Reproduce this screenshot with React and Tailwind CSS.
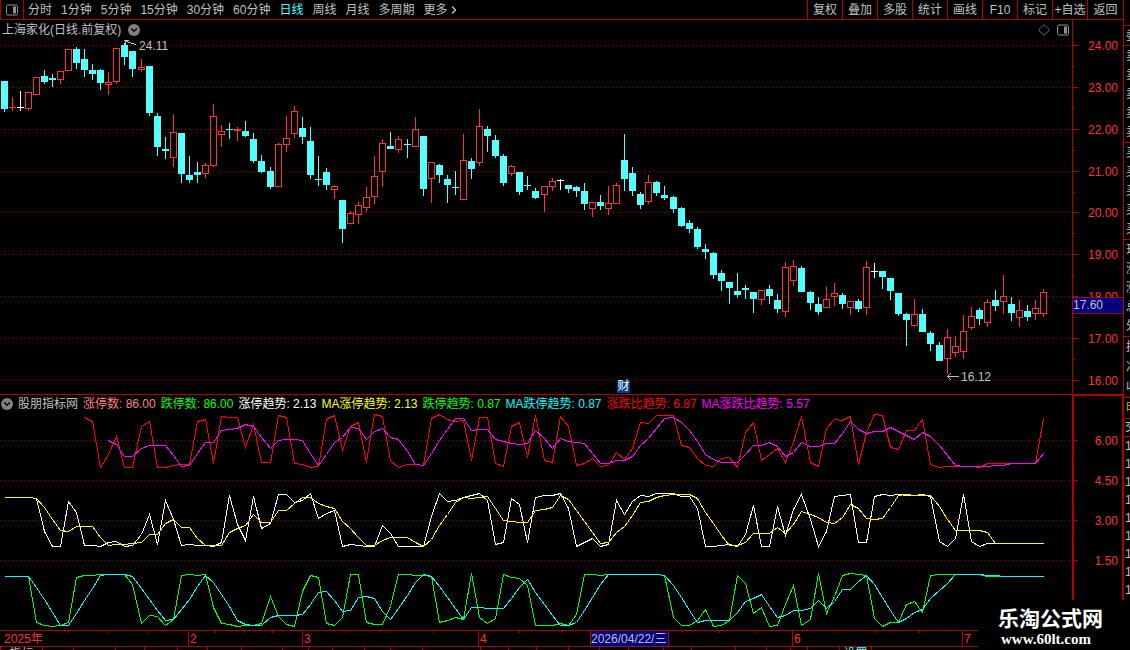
import { ChevronDown, ChevronRight, Diamond } from 'lucide-react';

const periods = ['分时', '1分钟', '5分钟', '15分钟', '30分钟', '60分钟', '日线', '周线', '月线', '多周期'];
const tools = ['复权', '叠加', '多股', '统计', '画线', 'F10', '标记', '+自选'];

// d = down, u = up, n = unchanged; then high, body top, body bottom, low
const candles = [
  ['d', 81, 81, 109, 112], ['u', 97, 107, 108, 111], ['n', 91, 107, 108, 111], ['u', 92, 92, 109, 111],
  ['u', 77, 77, 95, 95], ['d', 70, 76, 82, 84], ['d', 74, 78, 80, 87], ['u', 71, 71, 80, 84],
  ['u', 49, 49, 71, 71], ['d', 47, 49, 63, 69], ['d', 49, 59, 70, 77], ['d', 64, 70, 74, 80],
  ['d', 69, 70, 83, 90], ['u', 72, 82, 85, 95], ['u', 48, 48, 82, 84], ['d', 43, 45, 57, 65],
  ['d', 51, 51, 69, 77], ['u', 59, 67, 70, 72], ['d', 66, 66, 113, 116], ['d', 113, 116, 147, 156],
  ['d', 137, 149, 151, 159], ['u', 114, 132, 158, 167], ['d', 133, 133, 174, 183], ['d', 156, 175, 180, 183],
  ['d', 162, 172, 175, 183], ['u', 163, 165, 174, 178], ['u', 104, 116, 166, 167], ['u', 125, 131, 135, 147],
  ['d', 123, 129, 130, 139], ['u', 127, 129, 131, 141], ['d', 121, 131, 136, 137], ['d', 133, 139, 161, 163],
  ['d', 155, 161, 172, 173], ['d', 167, 171, 187, 189], ['u', 143, 144, 187, 187], ['u', 116, 138, 145, 152],
  ['u', 106, 111, 134, 138], ['d', 117, 128, 137, 144], ['d', 127, 141, 175, 179], ['d', 156, 179, 180, 186],
  ['d', 168, 172, 185, 190], ['u', 185, 186, 190, 199], ['d', 200, 200, 229, 243], ['u', 211, 213, 224, 224],
  ['u', 202, 205, 215, 224], ['u', 187, 197, 208, 212], ['u', 156, 176, 197, 204], ['u', 139, 143, 172, 187],
  ['d', 132, 146, 149, 149], ['u', 136, 139, 150, 153], ['d', 139, 144, 145, 158], ['u', 117, 129, 147, 147],
  ['d', 136, 136, 189, 196], ['u', 162, 162, 179, 203], ['d', 164, 165, 175, 183], ['d', 175, 179, 185, 203],
  ['d', 171, 187, 188, 195], ['u', 134, 160, 200, 200], ['d', 158, 161, 169, 179], ['u', 109, 126, 163, 166],
  ['d', 126, 129, 136, 152], ['d', 135, 140, 156, 158], ['d', 154, 156, 183, 186], ['u', 165, 166, 174, 176],
  ['d', 172, 172, 192, 195], ['d', 176, 185, 186, 190], ['d', 188, 191, 198, 199], ['u', 186, 186, 195, 212],
  ['u', 178, 181, 187, 191], ['n', 179, 180, 181, 190], ['d', 185, 185, 189, 193], ['d', 186, 187, 191, 197],
  ['d', 183, 191, 204, 210], ['u', 202, 202, 209, 217], ['d', 195, 202, 206, 210], ['u', 186, 203, 209, 215],
  ['u', 183, 185, 204, 204], ['d', 134, 160, 179, 191], ['d', 167, 173, 191, 196], ['d', 192, 194, 205, 209],
  ['u', 175, 182, 202, 204], ['d', 181, 182, 193, 196], ['d', 186, 195, 198, 200], ['d', 196, 197, 209, 213],
  ['d', 207, 208, 226, 227], ['d', 220, 223, 229, 233], ['d', 227, 229, 247, 249], ['d', 244, 249, 252, 259],
  ['d', 252, 253, 275, 279], ['d', 270, 273, 281, 291], ['d', 282, 282, 288, 304], ['d', 273, 291, 295, 298],
  ['d', 285, 288, 290, 299], ['d', 292, 292, 299, 313], ['u', 290, 290, 300, 305], ['d', 285, 289, 296, 304],
  ['d', 294, 300, 309, 313], ['u', 262, 267, 312, 317], ['u', 260, 266, 281, 286], ['d', 266, 268, 292, 292],
  ['d', 291, 292, 303, 310], ['d', 297, 304, 312, 315], ['u', 287, 299, 308, 308], ['u', 283, 293, 297, 306],
  ['d', 293, 295, 304, 309], ['u', 301, 301, 308, 315], ['d', 299, 301, 309, 312], ['u', 261, 267, 308, 315],
  ['n', 263, 271, 272, 278], ['d', 271, 271, 277, 289], ['d', 278, 278, 291, 300], ['d', 293, 293, 314, 316],
  ['d', 313, 314, 320, 346], ['u', 299, 314, 326, 327], ['d', 309, 314, 332, 332], ['d', 331, 333, 344, 351],
  ['d', 342, 345, 361, 361], ['u', 329, 337, 359, 374], ['u', 336, 346, 353, 357], ['u', 315, 331, 352, 359],
  ['u', 307, 316, 328, 330], ['d', 308, 310, 319, 325], ['u', 299, 302, 323, 327], ['d', 290, 300, 306, 311],
  ['u', 275, 296, 302, 314], ['d', 297, 304, 313, 321], ['u', 300, 310, 318, 327], ['d', 305, 311, 317, 321],
  ['u', 300, 308, 314, 320], ['u', 289, 292, 314, 317],
];

const series = [
  {
    color: '#ff0000',
    start: 10,
    values: [
      417, 421, 467, 454, 436, 467, 467, 426, 421, 467, 467, 465, 464, 464, 421, 419, 463, 416, 417, 417,
      447, 424, 462, 462, 415, 417, 463, 464, 467, 466, 419, 415, 450, 426, 422, 462, 414, 416, 460, 467,
      464, 464, 465, 418, 414, 419, 421, 420, 460, 417, 417, 463, 466, 426, 422, 457, 415, 460, 462, 416,
      426, 465, 463, 458, 466, 465, 452, 459, 448, 422, 423, 415, 415, 415, 445, 447, 458, 465, 466, 458,
      457, 467, 432, 422, 460, 454, 448, 462, 442, 416, 462, 466, 428, 419, 420, 416, 464, 432, 414, 415,
      447, 449, 430, 430, 419, 464, 467, 466, 466, 466, 466, 467, 463, 463, 463, 463, 463, 463, 463, 418,
    ],
  },
  {
    color: '#ff00ff',
    start: 13,
    values: [
      440, 444, 456, 456, 448, 445, 445, 445, 455, 466, 465, 453, 442, 442, 430, 429, 428, 424, 426, 437,
      448, 440, 439, 439, 440, 453, 465, 454, 442, 437, 427, 428, 439, 431, 428, 437, 439, 451, 464, 465,
      453, 440, 429, 418, 418, 430, 429, 429, 439, 441, 443, 444, 443, 430, 438, 448, 438, 441, 442, 443,
      453, 463, 463, 460, 460, 456, 445, 438, 428, 418, 417, 422, 430, 441, 454, 459, 462, 462, 462, 454,
      445, 445, 442, 446, 456, 452, 442, 446, 446, 443, 443, 433, 421, 429, 433, 431, 431, 427, 431, 435,
      439, 432, 436, 445, 455, 465, 466, 466, 466, 466, 465, 465, 463, 463, 463, 463, 453,
    ],
  },
  {
    color: '#ffffff',
    start: 0,
    values: [
      497, 497, 497, 497, 498, 531, 546, 546, 501, 512, 545, 545, 546, 542, 541, 546, 545, 534, 514, 544,
      500, 519, 545, 544, 545, 545, 546, 542, 495, 524, 540, 496, 528, 523, 494, 494, 502, 500, 493, 518,
      513, 510, 546, 544, 545, 546, 546, 525, 533, 546, 546, 546, 546, 516, 493, 501, 500, 497, 495, 493,
      500, 544, 542, 498, 504, 542, 497, 495, 495, 493, 508, 546, 542, 538, 546, 544, 500, 514, 501, 495,
      496, 493, 493, 493, 496, 496, 508, 546, 546, 545, 544, 546, 534, 505, 546, 546, 506, 535, 509, 494,
      519, 546, 531, 496, 495, 494, 542, 542, 496, 494, 495, 494, 495, 495, 494, 496, 541, 546, 538, 494,
      541, 546, 543, 543, 543, 543, 543, 543, 543, 543,
    ],
  },
  {
    color: '#ffff00',
    start: 0,
    values: [
      497, 497, 497, 497, 498, 507, 519, 530, 531, 526, 526, 526, 537, 545, 544, 544, 543, 542, 534, 534,
      523, 519, 527, 527, 538, 545, 545, 545, 532, 528, 525, 514, 522, 522, 510, 510, 503, 497, 497, 503,
      506, 508, 521, 528, 537, 545, 545, 540, 537, 537, 537, 542, 546, 539, 525, 514, 502, 497, 498, 497,
      496, 508, 520, 521, 522, 522, 510, 509, 507, 495, 499, 510, 521, 532, 543, 542, 532, 526, 515, 502,
      501, 497, 495, 494, 494, 494, 498, 512, 523, 535, 545, 545, 542, 533, 533, 533, 527, 533, 524, 511,
      514, 517, 522, 523, 517, 504, 508, 518, 519, 518, 507, 495, 494, 495, 495, 495, 506, 519, 530, 530,
      530, 530, 532, 543, 543, 543, 543, 543, 543, 543,
    ],
  },
  {
    color: '#00ff00',
    start: 0,
    values: [
      576, 576, 576, 576, 622, 625, 626, 625, 622, 577, 575, 575, 574, 574, 574, 574, 584, 623, 615, 616,
      625, 619, 575, 574, 575, 574, 607, 623, 624, 626, 625, 625, 623, 596, 616, 624, 626, 591, 575, 577,
      623, 625, 617, 574, 574, 622, 624, 624, 606, 574, 574, 575, 575, 576, 622, 620, 617, 619, 573, 617,
      623, 618, 574, 577, 578, 585, 625, 625, 625, 623, 625, 614, 574, 574, 575, 574, 574, 574, 574, 574,
      574, 574, 575, 617, 625, 625, 620, 609, 626, 625, 620, 575, 583, 613, 607, 626, 625, 604, 585, 625,
      619, 573, 613, 596, 575, 573, 574, 575, 618, 626, 622, 622, 604, 601, 612, 575, 574, 574, 574, 574,
      574, 574, 576, 576, 576, 576, 576, 576, 576, 576,
    ],
  },
  {
    color: '#00ffff',
    start: 0,
    values: [
      576, 576, 576, 576, 587, 599, 612, 625, 625, 613, 600, 588, 575, 574, 574, 574, 576, 588, 599, 610,
      620, 619, 609, 599, 586, 575, 582, 594, 606, 620, 624, 625, 625, 617, 615, 615, 615, 614, 604, 592,
      591, 600, 611, 610, 597, 596, 598, 611, 619, 608, 595, 582, 574, 576, 586, 597, 608, 619, 607, 607,
      608, 608, 608, 598, 587, 579, 592, 604, 615, 625, 625, 622, 610, 597, 584, 574, 574, 574, 574, 574,
      574, 574, 575, 585, 597, 610, 622, 620, 620, 620, 620, 612, 601, 598, 594, 606, 617, 615, 610, 610,
      608, 600, 608, 601, 589, 589, 581, 575, 584, 597, 610, 622, 618, 612, 609, 598, 590, 583, 574, 574,
      574, 574, 575, 575, 576, 576, 576, 576, 576, 576,
    ],
  },
];

const legend = [
  ['涨停数: 86.00', 'text-[#ff8080]'],
  ['跌停数: 86.00', 'text-[#00ff00]'],
  ['涨停趋势: 2.13', 'text-white'],
  ['MA涨停趋势: 2.13', 'text-[#ffff00]'],
  ['跌停趋势: 0.87', 'text-[#00ff00]'],
  ['MA跌停趋势: 0.87', 'text-[#00ffff]'],
  ['涨跌比趋势: 6.87', 'text-[#ff0000]'],
  ['MA涨跌比趋势: 5.57', 'text-[#ff00ff]'],
];

const prices = [
  ['24.00', 45], ['23.00', 87], ['22.00', 129], ['21.00', 171], ['20.00', 212],
  ['19.00', 254], ['18.00', 296], ['17.00', 338], ['16.00', 380],
];
const levels = [['6.00', 440], ['4.50', 480], ['3.00', 520], ['1.50', 560]];

const months = [['2025年', 188], ['2', 114], ['3', 176], ['4', 112]];
const monthTicks = [68, 108, 148, 216, 245, 273, 346, 390, 434, 520, 563, 683, 720, 756, 835, 877, 920];

const tabEdges = [
  0, 42, 73, 115, 144, 177, 207, 241, 282, 308, 332, 364, 390, 422, 480, 508, 536,
  568, 599, 628, 663, 691, 735, 766, 790, 807, 839, 871,
];

const quoteGroups = [
  { rows: ['委'], box: 'h-5' },
  { rows: ['卖', '卖', '卖', '卖', '卖'], box: 'h-[97px]' },
  { rows: ['买', '买', '买', '买', '买'], box: 'h-[97px]' },
  { rows: ['现', '涨', '涨', '总', '外'], box: 'h-[97px]' },
  { rows: ['换', '净', '收'], box: 'h-[61px]' },
];

const COLORS = { d: '#54ffff', u: '#ff3232', n: '#ffffff' };

const candleX = (i) => Math.floor(4.03 + i * 8.0601);

function Candle({ i, data }) {
  const [kind, high, top, bottom, low] = data;
  const x = candleX(i);
  const color = COLORS[kind];
  const hollow = kind === 'u' && bottom - top > 2;
  return (
    <g fill={color}>
      {top > high && <rect x={x} y={high} width="1" height={top - high} />}
      {low > bottom && <rect x={x} y={bottom} width="1" height={low - bottom} />}
      {hollow ? (
        <rect x={x - 2.5} y={top + 0.5} width="6" height={bottom - top - 1} fill="none" stroke={color} />
      ) : (
        <rect x={x - 3} y={top} width="7" height={bottom - top} />
      )}
    </g>
  );
}

function GridLine({ y }) {
  return <line x1="1" x2="100%" y1={y + 0.5} y2={y + 0.5} stroke="#b00000" strokeDasharray="1 3" />;
}

function AxisTicks({ rows, minor }) {
  return rows.map(([label, y]) => (
    <g key={label}>
      <rect x="0" y={y} width="5" height="1" fill="#b00000" />
      {y + minor < 570 && y !== 380 && <rect x="0" y={y + minor} width="2" height="1" fill="#b00000" />}
      <text x="45" y={y + 5} textAnchor="end" fill="#ff3232">{label}</text>
    </g>
  ));
}

function RoundToggle({ label }) {
  return (
    <button aria-label={label} className="flex size-3 items-center justify-center rounded-full bg-[#808080] text-black">
      <ChevronDown className="size-2.5" strokeWidth={3} />
    </button>
  );
}

function PanelIcon() {
  return (
    <svg viewBox="0 0 12 12" className="size-3">
      <rect x="0.5" y="1" width="11" height="10" rx="1.5" fill="none" stroke="currentColor" />
      <rect x="7" y="2.5" width="3" height="7" fill="currentColor" />
    </svg>
  );
}

function TopBar() {
  return (
    <header className="flex h-5 border-b border-[#b00000]">
      <button aria-label="面板" className="flex w-6 items-center justify-center border-x border-[#b00000] text-[#909090]">
        <PanelIcon />
      </button>
      <nav className="flex flex-1 items-center gap-[9px] pl-1">
        {periods.map((p) => (
          <button key={p} className={p === '日线' ? 'text-[#54ffff]' : ''}>{p}</button>
        ))}
        <button className="flex items-center">
          更多<ChevronRight className="size-3" strokeWidth={3} />
        </button>
      </nav>
      <div className="flex">
        {tools.map((t) => (
          <button key={t} className="w-[35px] border-l border-[#b00000]">{t}</button>
        ))}
        <button className="w-9 border-l border-[#b00000]">返回</button>
      </div>
    </header>
  );
}

function PriceChart() {
  return (
    <section className="relative min-w-0 flex-1">
      <svg className="block h-[374px] w-full" shapeRendering="crispEdges">
        <g transform="translate(0 -20)">
          {prices.map(([label, y]) => <GridLine key={label} y={y} />)}
          {candles.map((c, i) => <Candle key={i} i={i} data={c} />)}
          <g fill="none" stroke="#c0c0c0">
            <path d="M125.5 45V40.5M124 40.5H129M126 41.5L136 44.5" />
            <path d="M947 376.5H959M951 373L947.5 376.5L951 380" />
          </g>
          <g fill="#c0c0c0">
            <text x="139" y="50">24.11</text>
            <text x="961" y="381">16.12</text>
          </g>
        </g>
      </svg>
      <div className="absolute inset-x-0 top-0 flex h-5 items-center gap-[7px] pl-0.5">
        <h1>上海家化(日线.前复权)</h1>
        <RoundToggle label="展开" />
        <div className="ml-auto flex items-center gap-[7px] pr-[3px] text-[#909090]">
          <Diamond className="size-3" strokeWidth={1.5} />
          <PanelIcon />
        </div>
      </div>
      <button className="absolute bottom-px left-[617px] size-[13px] bg-[#004080] text-center leading-[13px] text-white">财</button>
    </section>
  );
}

function PriceAxis() {
  return (
    <aside className="relative w-[51px] border-l border-[#b00000]">
      <svg className="block h-[374px] w-full" shapeRendering="crispEdges">
        <g transform="translate(0 -20)">
          <AxisTicks rows={prices} minor={21} />
        </g>
      </svg>
      <div className="absolute inset-x-0 top-[277px] h-[17px] border-y border-[#b00000] bg-[#000080] leading-[15px]">17.60</div>
    </aside>
  );
}

function IndicatorChart() {
  return (
    <section className="min-w-0 flex-1 border-t border-[#b00000]">
      <div className="flex h-[18px] items-center gap-[5px] whitespace-nowrap pl-px">
        <RoundToggle label="指标" />
        <span>股朋指标网</span>
        {legend.map(([text, color]) => (
          <span key={text} className={color}>{text}</span>
        ))}
      </div>
      <svg className="block h-[217px] w-full" shapeRendering="crispEdges">
        <g transform="translate(0 -413)">
          {levels.map(([label, y]) => <GridLine key={label} y={y} />)}
          {series.map((s) => (
            <polyline
              key={s.color}
              fill="none"
              stroke={s.color}
              points={s.values.map((v, k) => `${candleX(s.start + k) + 0.5},${v + 0.5}`).join(' ')}
            />
          ))}
        </g>
      </svg>
    </section>
  );
}

function TimeAxis() {
  return (
    <div className="relative flex h-[17px] border-y border-[#b00000] leading-[17px] text-[#ff3232]">
      {months.map(([label, width], i) => (
        <span key={label} className={i ? 'border-l border-[#b00000] pl-px' : 'pl-1'} style={{ width }}>{label}</span>
      ))}
      <span className="w-[79px] whitespace-nowrap border-x border-[#b00000] bg-[#000080] text-[#c0c0c0]">2026/04/22/三</span>
      <span className="w-[123px]" />
      <span className="w-[170px] border-l border-[#b00000] pl-px">6</span>
      <span className="flex-1 border-l border-[#b00000] pl-px">7</span>
      <svg className="absolute inset-x-0 top-0 h-0.5 w-full" shapeRendering="crispEdges">
        {monthTicks.map((x) => <rect key={x} x={x - 1} y="0" width="1" height="2" fill="#b00000" />)}
      </svg>
    </div>
  );
}

function BottomTabs() {
  return (
    <footer className="flex h-[3px] overflow-hidden leading-[14px]">
      {tabEdges.slice(0, -1).map((x, i) => (
        <button
          key={x}
          className="shrink-0 overflow-hidden border-l border-[#b00000] text-[#54ffff]"
          style={{ width: tabEdges[i + 1] - x }}
        >
          {i === 0 && <span className="text-[#c0c0c0]">指标</span>}
          {i === 26 && '设置'}
        </button>
      ))}
      <span className="border-l border-[#b00000]" />
    </footer>
  );
}

function QuoteStrip() {
  return (
    <aside className="w-[7px] shrink-0 overflow-hidden border-l border-[#b00000] pt-[25px]">
      {quoteGroups.map((g) => (
        <div key={g.rows.join('')} className={`flex flex-col justify-around border-t border-[#b00000] pl-0.5 ${g.box}`}>
          {g.rows.map((r, i) => <span key={i} className="w-3 leading-4">{r}</span>)}
        </div>
      ))}
      <div className="h-[21px] border-t border-[#b00000] pl-0.5 leading-5 text-[#c0c000]"><span className="block w-3">明</span></div>
      <div className="h-[19px] border-y border-[#b00000] pl-px leading-[17px]"><span className="block w-3">交</span></div>
      {[...Array(9)].map((_, i) => <span key={i} className="block h-[18px] w-3 pl-px leading-[18px]">1</span>)}
    </aside>
  );
}

export default function App() {
  return (
    <div className="relative flex min-h-screen overflow-hidden bg-black font-['Liberation_Sans','Noto_Sans_CJK_SC',sans-serif] text-[12px] leading-4 text-[#c0c0c0]">
      <main className="min-w-0 flex-1">
        <TopBar />
        <div className="flex">
          <PriceChart />
          <PriceAxis />
        </div>
        <div className="flex">
          <IndicatorChart />
          <aside className="w-[51px] border-l-2 border-r border-t-2 border-[#b00000]">
            <svg className="block h-[234px] w-full" shapeRendering="crispEdges">
              <g transform="translate(-1 -396)">
                <AxisTicks rows={levels} minor={20} />
              </g>
            </svg>
          </aside>
        </div>
        <TimeAxis />
        <BottomTabs />
      </main>
      <QuoteStrip />
      <a href="#home" className="absolute bottom-0 right-0 h-[50px] w-[152px] bg-black pl-5 pt-1.5 text-white">
        <span className="block text-[21px] font-bold leading-[26px]">乐淘公式网</span>
        <span className="block pl-[3px] font-['Liberation_Serif',serif] text-[15px] font-bold leading-[15px]">www.60lt.com</span>
      </a>
    </div>
  );
}
